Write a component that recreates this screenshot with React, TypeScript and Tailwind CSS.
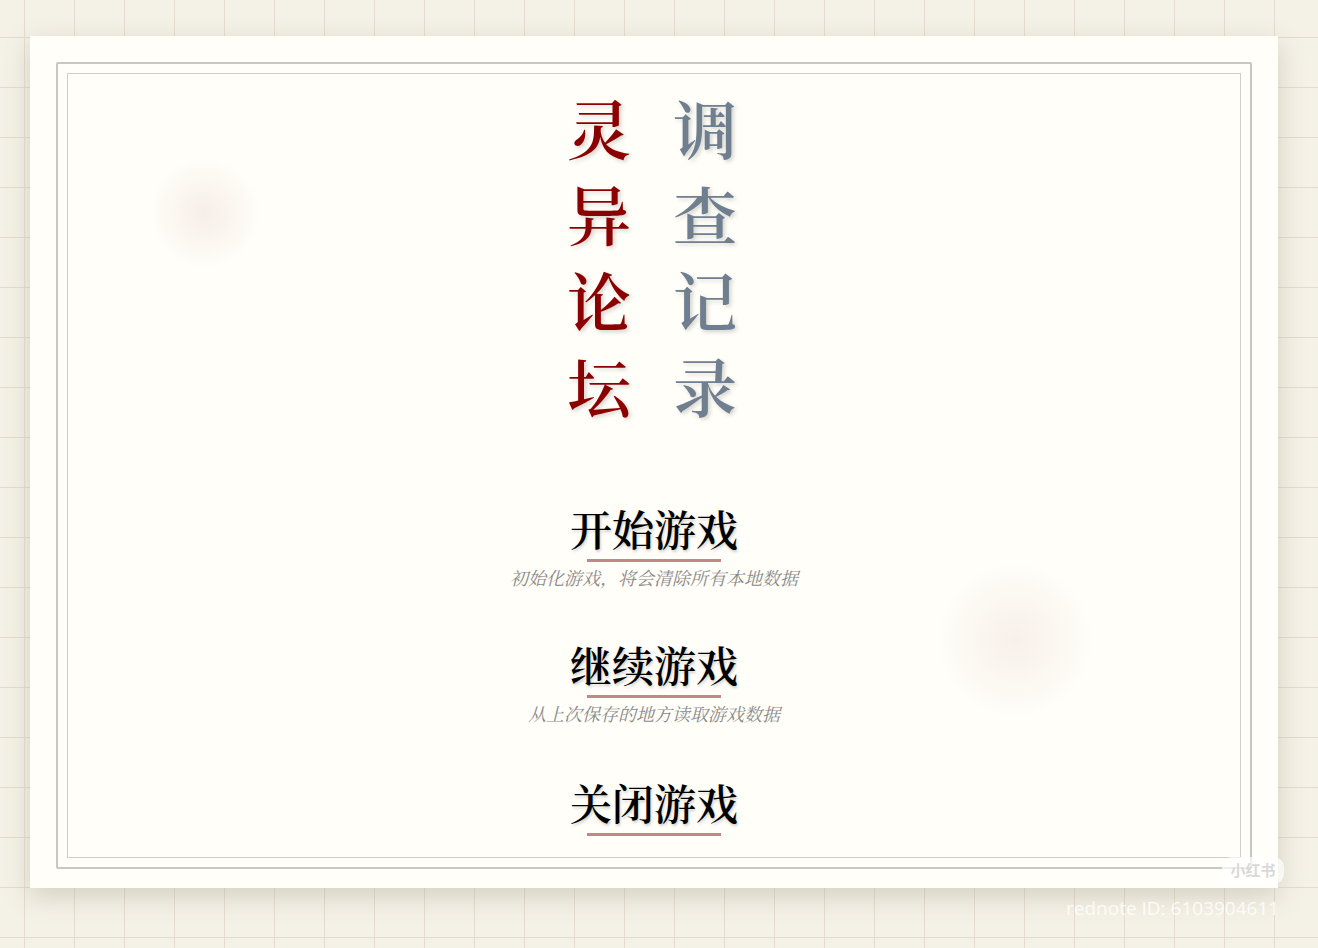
const leftCol = ["灵", "异", "论", "坛"];
const rightCol = ["调", "查", "记", "录"];

const menu = [
  { label: "开始游戏", hint: "初始化游戏，将会清除所有本地数据" },
  { label: "继续游戏", hint: "从上次保存的地方读取游戏数据" },
  { label: "关闭游戏", hint: "" },
];

const cjk = "font-['Noto_Serif_CJK_SC','Noto_Sans_CJK_SC','Noto_Sans_CJK_JP',serif]";

export default function App() {
  return (
    <div className="relative min-h-screen w-full overflow-hidden bg-[#f4f1e6] bg-[linear-gradient(to_right,#e4ddcf_1px,transparent_1px),linear-gradient(to_bottom,#e4ddcf_1px,transparent_1px)] bg-[size:50px_50px] bg-[position:24px_37px] pt-[36px] pl-[30px]">
      <div className="relative h-[852px] w-[1248px] bg-[#fffef8] p-[26px] shadow-[0_8px_24px_rgba(120,110,90,0.25)]">
        {/* soft blobs */}
        <div className="pointer-events-none absolute left-[115px] top-[117px] h-[120px] w-[120px] rounded-full bg-[radial-gradient(circle,rgba(200,150,150,0.16),transparent_65%)]" />
        <div className="pointer-events-none absolute left-[900px] top-[519px] h-[170px] w-[170px] rounded-full bg-[radial-gradient(circle,rgba(200,150,150,0.14),transparent_65%)]" />

        <div className="h-[807px] w-[1196px] rounded-[2px] border-2 border-[#c8c7c2] p-[9px]">
          <div className="relative flex h-full w-full flex-col items-center border border-[#cfcec9] pt-[9px]">
            {/* title */}
            <div className={`flex gap-[42px] ${cjk} text-[64px] font-semibold leading-[86px] -translate-x-[2px]`}>
              <div className="flex flex-col text-[#8b0000] [text-shadow:2px_2px_4px_rgba(0,0,0,0.18)]">
                {leftCol.map((c) => (
                  <span key={c}>{c}</span>
                ))}
              </div>
              <div className="flex flex-col text-[#6f7f90] [text-shadow:2px_2px_4px_rgba(0,0,0,0.18)]">
                {rightCol.map((c) => (
                  <span key={c}>{c}</span>
                ))}
              </div>
            </div>

            {/* menu */}
            <div className="mt-[76px] flex flex-col items-center gap-[50px]">
              {menu.map((m) => (
                <div key={m.label} className={`flex flex-col items-center ${m.hint ? "" : "mt-[2px]"}`}>
                  <div className={`${cjk} text-[42px] font-semibold leading-[50px] text-black [text-shadow:1px_2px_3px_rgba(0,0,0,0.2)]`}>
                    {m.label}
                  </div>
                  <div className="mt-[6px] h-[3px] w-[134px] bg-[#c48686]" />
                  {m.hint && (
                    <div className={`mt-[3px] ${cjk} text-[18px] italic leading-[24px] text-[#8a8a8a]`}>
                      {m.hint}
                    </div>
                  )}
                </div>
              ))}
            </div>
          </div>
        </div>
      </div>

      {/* watermark */}
      <div className="absolute left-[1222px] top-[857px] flex h-[27px] w-[62px] items-center justify-center rounded-[10px] bg-white/70 font-['Noto_Sans_CJK_SC',sans-serif] text-[15px] font-bold text-[#d9d9d9]">
        小红书
      </div>
      <div className="absolute left-[1066px] top-[894px] font-['Open_Sans',sans-serif] text-[19px] text-white/80">
        rednote ID: 6103904611
      </div>
    </div>
  );
}
